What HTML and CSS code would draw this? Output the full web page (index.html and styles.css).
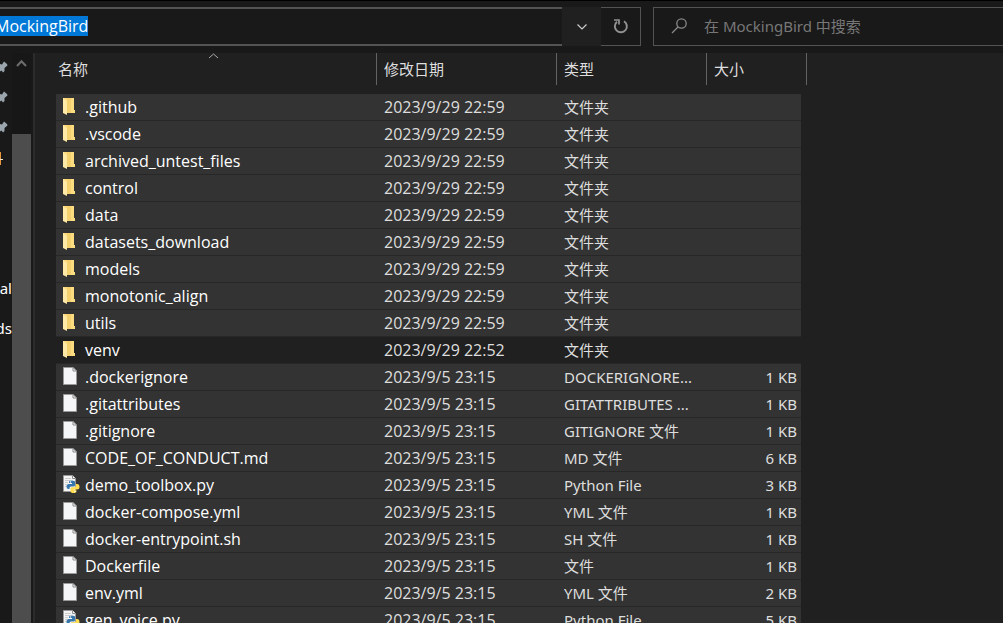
FILE: index.html
```html
<!DOCTYPE html>
<html lang="zh-CN">
<head>
<meta charset="utf-8">
<title>MockingBird</title>
<link rel="stylesheet" href="styles.css">
</head>
<body>
<svg class="defs" aria-hidden="true">
  <defs>
    <symbol id="pin" viewBox="0 0 8 14"><path d="M0 3 L2 3.500 L4 .5 L7 3 L7.500 4.500 L4.500 7 L4.500 10 L3 11.500 L1.500 9.500 L0 10.500 Z" fill="#9aa5ad"/></symbol>
    <symbol id="folder" viewBox="0 -1 18 18"><path d="M1 0H12V12L13 13V15H3L1 14Z" fill="#ffd978"/><path d="M5 0H12V12L12 15H5Z" fill="#f5d06f"/><path d="M9 0H12V12H13V15H9Z" fill="#fbdc80"/><path d="M1 0L5 3V17L1 15Z" fill="#ffe9a6"/></symbol>
    <symbol id="file" viewBox="0 0 18 18"><path d="M1.500 .5H11L14.500 4V17.500H1.500Z" fill="#f4f6f8" stroke="#999" stroke-width="1"/><path d="M11 .5V4H14.500Z" fill="#fff" stroke="#888" stroke-width="1"/></symbol>
    <symbol id="python" viewBox="0 0 18 18"><path d="M1.500 .5H10.500L13.500 3.500V16.500H1.500Z" fill="#f4f4f4" stroke="#999"/><path d="M10.500 .5V3.500H13.500" fill="#fff" stroke="#888"/><path d="M3 3.500H9M3 5.500H8M3 7.500H6M3 9.500H5M3 11.500H5" stroke="#ccc"/><path d="M7 8V6.800Q7 5.500 10 5.500Q13 5.500 13 7V10Q13 11.500 11.500 11.500H9Q7.500 11.500 7.500 13V14H6.500Q4.500 14 4.500 11.500Q4.500 9 6.500 9H10V8Z" fill="#3576ac"/><path d="M14 9H15Q17.500 9 17.500 12Q17.500 14.500 15 14.500H11.500V15.200H14.500V16Q14.500 18 11.500 18Q8.500 18 8.500 16V13.500Q8.500 12.200 10 12.200H12.500Q14 12.200 14 10.500Z" fill="#ffdc50"/><circle cx="8.500" cy="7" r=".7" fill="#fff"/><circle cx="13" cy="16.500" r=".7" fill="#fff"/></symbol>
  </defs>
</svg>
<header class="bar">
  <form class="address">
    <input class="address-input" id="address" aria-label="地址" value="MockingBird" spellcheck="false" autocomplete="off">
  </form>
  <button class="history" type="button" aria-label="以前的位置"><svg width="12" height="8" viewBox="0 0 12 8"><path d="M1.500 1.500L6 6L10.500 1.500" fill="none" stroke="#ccc" stroke-width="1.200"/></svg></button>
  <button class="refresh" type="button" aria-label="刷新"><svg width="16" height="17" viewBox="0 0 16 17"><path d="M11 3.200A6 6 0 1 1 4 3.700" fill="none" stroke="#929292" stroke-width="1.900"/><path d="M1 2H6V6.500" fill="none" stroke="#929292" stroke-width="1.700"/></svg></button>
  <label class="search"><svg width="17" height="17" viewBox="0 0 17 17"><circle cx="10.500" cy="6.500" r="4.700" fill="none" stroke="#8a8a8a" stroke-width="1.300"/><path d="M7 10L1 16" stroke="#8a8a8a" stroke-width="1.300"/></svg>
    <input class="search-input" type="search" aria-label="搜索" placeholder="在 MockingBird 中搜索">
  </label>
</header>
<div class="body">
  <nav class="tree" aria-label="导航">
    <span class="tree-item"><svg width="8" height="14"><use href="#pin"/></svg></span>
    <span class="tree-item"><svg width="8" height="14"><use href="#pin"/></svg></span>
    <span class="tree-item"><svg width="8" height="14"><use href="#pin"/></svg></span>
    <span class="tree-item"><svg width="4" height="14" viewBox="0 0 4 14"><path d="M0 1H1V14H0Z" fill="#e8963a"/><path d="M0 8H3V9H0Z" fill="#f7e3cd"/></svg></span>
    <a class="tree-item tree-drive" href="#">al</a>
    <a class="tree-item tree-sub" href="#">ds</a>
  </nav>
  <div class="scroll">
    <button class="scroll-up" type="button" aria-label="向上滚动"><svg width="11" height="9" viewBox="0 0 11 9"><path d="M1 7L5.500 2.300L10 7" fill="none" stroke="#6d6d6d" stroke-width="2"/></svg></button>
    <div class="thumb"></div>
  </div>
  <main class="content">
    <table class="files">
      <colgroup><col class="c-name"><col class="c-date"><col class="c-type"><col class="c-size"><col class="c-end"></colgroup>
      <thead><tr>
        <th><button class="head head-name" type="button">名称<svg class="sort" width="11" height="6" viewBox="0 0 11 6"><path d="M1 5L5.500 1L10 5" fill="none" stroke="#aaa"/></svg></button></th>
        <th><button class="head" type="button">修改日期</button></th>
        <th><button class="head" type="button">类型</button></th>
        <th colspan="2"><button class="head" type="button">大小</button></th>
      </tr></thead>
      <tbody>
        <tr><td><span class="name"><svg class="icon"><use href="#folder"/></svg>.github</span></td><td class="date">2023/9/29 22:59</td><td class="type">文件夹</td><td class="size"></td></tr>
        <tr><td><span class="name"><svg class="icon"><use href="#folder"/></svg>.vscode</span></td><td class="date">2023/9/29 22:59</td><td class="type">文件夹</td><td class="size"></td></tr>
        <tr><td><span class="name"><svg class="icon"><use href="#folder"/></svg>archived_untest_files</span></td><td class="date">2023/9/29 22:59</td><td class="type">文件夹</td><td class="size"></td></tr>
        <tr><td><span class="name"><svg class="icon"><use href="#folder"/></svg>control</span></td><td class="date">2023/9/29 22:59</td><td class="type">文件夹</td><td class="size"></td></tr>
        <tr><td><span class="name"><svg class="icon"><use href="#folder"/></svg>data</span></td><td class="date">2023/9/29 22:59</td><td class="type">文件夹</td><td class="size"></td></tr>
        <tr><td><span class="name"><svg class="icon"><use href="#folder"/></svg>datasets_download</span></td><td class="date">2023/9/29 22:59</td><td class="type">文件夹</td><td class="size"></td></tr>
        <tr><td><span class="name"><svg class="icon"><use href="#folder"/></svg>models</span></td><td class="date">2023/9/29 22:59</td><td class="type">文件夹</td><td class="size"></td></tr>
        <tr><td><span class="name"><svg class="icon"><use href="#folder"/></svg>monotonic_align</span></td><td class="date">2023/9/29 22:59</td><td class="type">文件夹</td><td class="size"></td></tr>
        <tr><td><span class="name"><svg class="icon"><use href="#folder"/></svg>utils</span></td><td class="date">2023/9/29 22:59</td><td class="type">文件夹</td><td class="size"></td></tr>
        <tr class="plain"><td><span class="name"><svg class="icon"><use href="#folder"/></svg>venv</span></td><td class="date">2023/9/29 22:52</td><td class="type">文件夹</td><td class="size"></td></tr>
        <tr><td><span class="name"><svg class="icon"><use href="#file"/></svg>.dockerignore</span></td><td class="date">2023/9/5 23:15</td><td class="type">DOCKERIGNORE...</td><td class="size">1 KB</td></tr>
        <tr><td><span class="name"><svg class="icon"><use href="#file"/></svg>.gitattributes</span></td><td class="date">2023/9/5 23:15</td><td class="type">GITATTRIBUTES ...</td><td class="size">1 KB</td></tr>
        <tr><td><span class="name"><svg class="icon"><use href="#file"/></svg>.gitignore</span></td><td class="date">2023/9/5 23:15</td><td class="type">GITIGNORE 文件</td><td class="size">1 KB</td></tr>
        <tr><td><span class="name"><svg class="icon"><use href="#file"/></svg>CODE_OF_CONDUCT.md</span></td><td class="date">2023/9/5 23:15</td><td class="type">MD 文件</td><td class="size">6 KB</td></tr>
        <tr><td><span class="name"><svg class="icon"><use href="#python"/></svg>demo_toolbox.py</span></td><td class="date">2023/9/5 23:15</td><td class="type">Python File</td><td class="size">3 KB</td></tr>
        <tr><td><span class="name"><svg class="icon"><use href="#file"/></svg>docker-compose.yml</span></td><td class="date">2023/9/5 23:15</td><td class="type">YML 文件</td><td class="size">1 KB</td></tr>
        <tr><td><span class="name"><svg class="icon"><use href="#file"/></svg>docker-entrypoint.sh</span></td><td class="date">2023/9/5 23:15</td><td class="type">SH 文件</td><td class="size">1 KB</td></tr>
        <tr><td><span class="name"><svg class="icon"><use href="#file"/></svg>Dockerfile</span></td><td class="date">2023/9/5 23:15</td><td class="type">文件</td><td class="size">1 KB</td></tr>
        <tr><td><span class="name"><svg class="icon"><use href="#file"/></svg>env.yml</span></td><td class="date">2023/9/5 23:15</td><td class="type">YML 文件</td><td class="size">2 KB</td></tr>
        <tr><td><span class="name"><svg class="icon"><use href="#python"/></svg>gen_voice.py</span></td><td class="date">2023/9/5 23:15</td><td class="type">Python File</td><td class="size">5 KB</td></tr>
      </tbody>
    </table>
  </main>
</div>
<script src="main.js"></script>
</body>
</html>
```

FILE: styles.css
```css
* { box-sizing: border-box; }

body {
  margin: 0;
  height: 100vh;
  display: flex;
  flex-direction: column;
  overflow: hidden;
  background: #191919;
  color: #fff;
  font: 15px/20px "Noto Sans", "Noto Sans CJK SC", sans-serif;
}

button, input {
  font: inherit;
  color: inherit;
  background: none;
  border: 0;
  border-radius: 0;
  padding: 0;
  margin: 0;
  outline: 0;
}

.defs { position: absolute; width: 0; height: 0; }

/* Address and search bar */
.bar {
  flex: none;
  display: flex;
  height: 53px;
  padding: 6px 0 7px;
  border-top: 1px solid #000;
}

.address {
  flex: 562 1 562px;
  display: flex;
  align-items: center;
  padding-bottom: 2px;
  border: solid #535353;
  border-width: 2px 0;
}

.address-input {
  flex: 1;
  height: 20px;
  margin-left: -5px;
  font-family: "Open Sans", sans-serif;
  font-size: 16px;
}
.address-input::selection { background: #0078d7; color: #fff; }

.history, .refresh { display: grid; place-items: center; flex: none; }
.history { width: 39px; background: #202020; }
.refresh { width: 40px; border: 1px solid #535353; border-left: 0; }

.search {
  flex: 350 1 350px;
  display: flex;
  align-items: center;
  gap: 16px;
  margin-left: 12px;
  padding: 0 0 2px 17px;
  border: 1px solid #535353;
  border-right: 0;
}

.search-input { flex: 1; min-width: 0; }
.search-input::placeholder { color: #777; opacity: 1; }

/* Navigation tree and its scroll bar */
.body { flex: 1; min-height: 0; display: flex; }

.tree {
  flex: none;
  width: 12px;
  overflow: hidden;
  display: flex;
  flex-direction: column;
}

.tree-item {
  flex: none;
  height: 30px;
  display: flex;
  align-items: center;
  color: #fff;
  text-decoration: none;
}

.tree-drive { margin-top: 100px; justify-content: flex-end; }
.tree-sub { margin-top: 10px; justify-content: flex-end; }

.scroll {
  flex: none;
  width: 19px;
  background: #171717;
  display: flex;
  flex-direction: column;
}

.scroll-up { height: 20px; display: grid; place-items: center; }
.thumb { flex: 1; margin-top: 61px; background: #4d4d4d; }

/* File list */
.content {
  flex: 1;
  min-width: 0;
  overflow: hidden;
  margin-left: 2px;
  padding-left: 21px;
  background: #202020;
  border-left: 2px solid #2b2b2b;
}

.files {
  width: 751px;
  table-layout: fixed;
  border-collapse: separate;
  border-spacing: 0;
}

.c-name { width: 321px; }
.c-date { width: 180px; }
.c-type { width: 150px; }
.c-size { width: 94px; }
.c-end { width: 6px; }

th { height: 41px; padding: 0; vertical-align: top; font-weight: 400; }

.head {
  position: relative;
  display: block;
  width: 100%;
  height: 32px;
  padding-left: 7px;
  text-align: left;
  color: #dedede;
  border-right: 1px solid #636363;
}

.head-name { padding-left: 2px; }
.sort { position: absolute; top: 0; left: 152px; }

td {
  height: 27px;
  padding: 0 7px;
  white-space: nowrap;
  color: #dedede;
  background: #333;
  border-bottom: 1px solid #272727;
}

td:first-child { padding-left: 6px; color: #fff; }
.plain td { background: #202020; }
.type { overflow: hidden; text-overflow: ellipsis; }
.size { padding-right: 4px; text-align: right; }

.name, .date { font-family: "Open Sans", sans-serif; font-size: 16px; }
.name { display: flex; align-items: center; gap: 5px; }
.icon { flex: none; width: 18px; height: 18px; margin-bottom: 2px; }
```

FILE: main.js
```js
const address = document.getElementById("address");
address.focus();
address.select();
```
